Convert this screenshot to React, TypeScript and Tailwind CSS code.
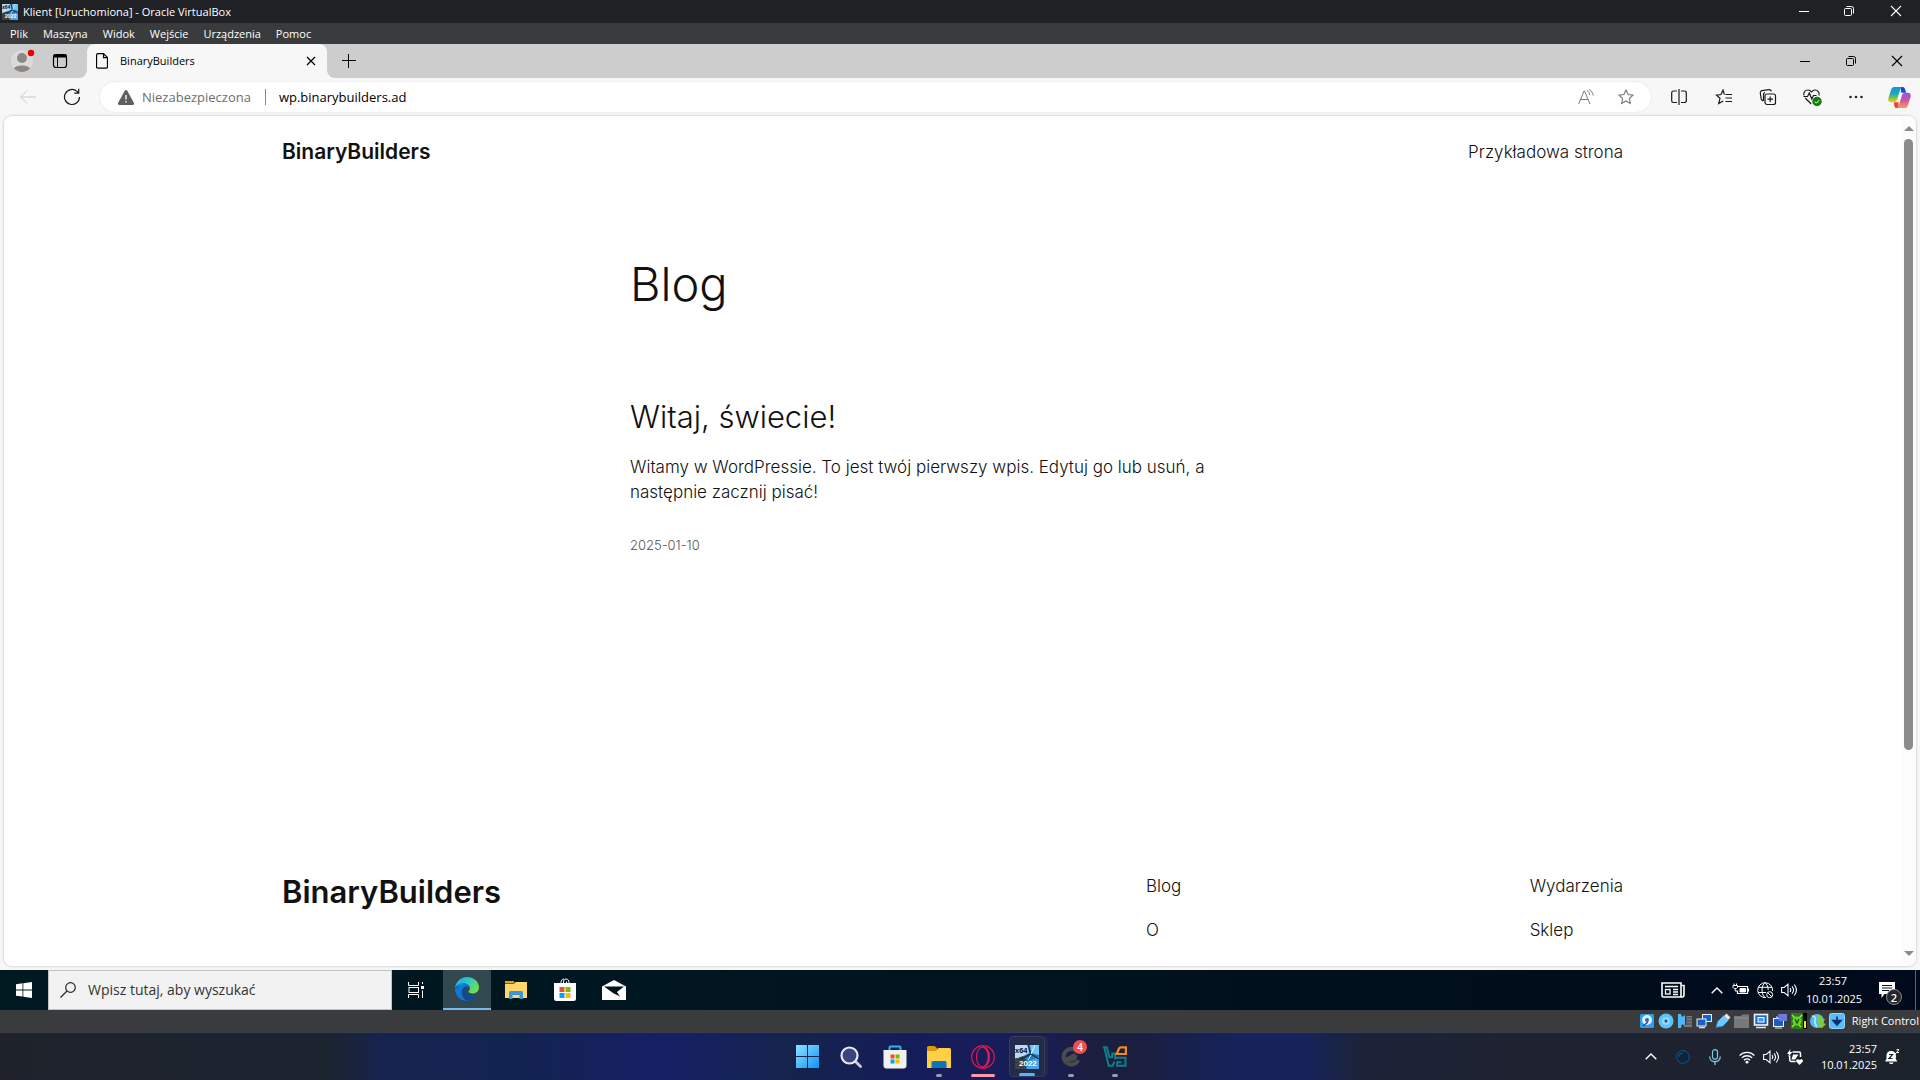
import type { ReactNode } from "react";

type IconProps = { children: ReactNode; className?: string; box?: string };

function Line({ children, className = "size-5", box = "0 0 20 20" }: IconProps) {
  return (
    <svg viewBox={box} className={className} fill="none" stroke="currentColor" aria-hidden="true">
      {children}
    </svg>
  );
}

function IconButton({ label, className = "", children }: { label: string; className?: string; children: ReactNode }) {
  return (
    <button type="button" aria-label={label} className={`flex shrink-0 items-center justify-center ${className}`}>
      {children}
    </button>
  );
}

function VmIcon({ className }: { className: string }) {
  return (
    <svg viewBox="0 0 24 24" className={className} aria-hidden="true">
      <rect width="24" height="24" fill="#2a78b4" />
      <path d="M0 0h13l1 8-9 5H0z" fill="#b9d9ee" />
      <path d="M15 0h9v10l-8-2z" fill="#6fc4f5" />
      <path d="M0 14l8-3 3 4v9H0z" fill="#3b4148" />
      <path d="M24 12v12H12l1-8z" fill="#4aa5ea" />
      <path d="M13 0l3 9 8 5M16 9L4 15" stroke="#123552" strokeWidth="1.4" fill="none" />
      <path d="M16 9l4-9M13 15l3-5" stroke="#e9f6ff" strokeWidth="1" fill="none" />
      <text x="0" y="8" fontSize="7.5" fontWeight="700" fill="#0b0f14" fontFamily="Liberation Sans">x64</text>
      <text x="4" y="21" fontSize="8" fontWeight="700" fill="#fff" fontFamily="Liberation Sans">2022</text>
    </svg>
  );
}

function Minimize() {
  return <Line className="size-3" box="0 0 12 12"><path d="M1 6.5h10" /></Line>;
}
function Restore() {
  return (
    <Line className="size-3" box="0 0 12 12">
      <rect x="1.5" y="3.5" width="7" height="7" rx="1" />
      <path d="M3.5 1.5h5a2 2 0 0 1 2 2v5" />
    </Line>
  );
}
function Close() {
  return <Line className="size-3" box="0 0 12 12"><path d="M1 1l10 10M11 1L1 11" strokeWidth="1.1" /></Line>;
}

function WindowTitle() {
  return (
    <header className="flex h-[23px] shrink-0 items-center bg-[#202125] pl-[2px] text-white">
      <VmIcon className="size-4" />
      <h1 className="ml-[5px] flex-1 text-[11px] leading-4">Klient [Uruchomiona] - Oracle VirtualBox</h1>
      <div className="flex pb-[2px]">
        <IconButton label="Minimalizuj" className="w-[45px]"><Minimize /></IconButton>
        <IconButton label="Przywróć" className="w-[45px]"><Restore /></IconButton>
        <IconButton label="Zamknij" className="w-[49px]"><Close /></IconButton>
      </div>
    </header>
  );
}

const menus = ["Plik", "Maszyna", "Widok", "Wejście", "Urządzenia", "Pomoc"];

function MenuBar() {
  return (
    <nav className="flex h-[21px] shrink-0 items-center gap-[15px] bg-[#3a3b3c] pl-[10px] text-[11px] leading-4 text-white">
      {menus.map((m) => (
        <button key={m} type="button">{m}</button>
      ))}
    </nav>
  );
}

function TabStrip() {
  return (
    <div className="flex h-[34px] shrink-0 bg-[#cdcdcd] text-black">
      <IconButton label="Profil" className="w-11">
        <svg viewBox="0 0 24 24" className="size-6 overflow-visible" aria-hidden="true">
          <circle cx="12" cy="12" r="11" fill="#dcdad8" />
          <circle cx="12" cy="9" r="5" fill="#8c8885" />
          <path d="M4 19.5C5.500 15.500 18.500 15.500 20 19.500C16 24 8 24 4 19.500z" fill="#8c8885" />
          <circle cx="21" cy="4" r="3.200" fill="#e60000" />
        </svg>
      </IconButton>
      <IconButton label="Obszary robocze" className="w-8">
        <Line className="size-4" box="0 0 16 16">
          <rect x="1.500" y="1.500" width="13" height="13" rx="2.500" strokeWidth="1.200" />
          <path d="M1.500 3.500h13M1.500 2.500h13" strokeWidth="2" />
          <path d="M5.500 4v10.500" />
        </Line>
      </IconButton>
      <div className="flex w-[11px] items-end bg-[#f7f7f7]">
        <div className="h-full w-full rounded-br-lg bg-[#cdcdcd]" />
      </div>
      <div className="flex w-[240px] items-center rounded-t-lg bg-[#f7f7f7] pr-[9px] pl-[9px]">
        <Line className="h-4 w-3" box="0 0 12 16">
          <path d="M.6 2.200A1.500 1.500 0 0 1 2 .7h5.500l4 4v9a1.500 1.500 0 0 1-1.500 1.500H2a1.500 1.500 0 0 1-1.500-1.500zM7.500.7v4h4" strokeWidth="1.200" />
        </Line>
        <span className="ml-3 flex-1 text-[11px] leading-4">BinaryBuilders</span>
        <IconButton label="Zamknij kartę" className="size-[14px]">
          <Line className="size-[10px]" box="0 0 10 10"><path d="M1 1l8 8M9 1L1 9" strokeWidth="1.200" /></Line>
        </IconButton>
      </div>
      <div className="w-[8px] bg-[#f7f7f7]">
        <div className="h-full rounded-bl-lg bg-[#cdcdcd]" />
      </div>
      <IconButton label="Nowa karta" className="w-7">
        <Line className="size-[14px]" box="0 0 14 14"><path d="M6.500 0v14M0 6.500h14" /></Line>
      </IconButton>
      <div className="flex-1" />
      <IconButton label="Minimalizuj przeglądarkę" className="w-[46px]"><Minimize /></IconButton>
      <IconButton label="Przywróć przeglądarkę" className="w-[46px]"><Restore /></IconButton>
      <IconButton label="Zamknij przeglądarkę" className="w-[46px]"><Close /></IconButton>
    </div>
  );
}

const STAR = "M8 1l2.100 4.500 4.900.6-3.600 3.400.9 4.900L8 12l-4.300 2.400.9-4.900L1 6.100l4.900-.6z";

function Toolbar() {
  return (
    <div className="flex h-[38px] shrink-0 items-center text-[#1a1a1a]">
      <IconButton label="Wstecz" className="w-14 text-[#c9c9c9]">
        <Line className="size-4" box="0 0 16 16"><path d="M16 8H1M7 1.500L.7 8 7 14.500" /></Line>
      </IconButton>
      <IconButton label="Odśwież" className="mr-[12px] w-8">
        <Line className="size-[18px]" box="0 0 18 18">
          <path d="M16.500 9A7.500 7.500 0 1 1 14 3.400L15.700 5M15.700.8V5.200h-4.400" strokeWidth="1.200" />
        </Line>
      </IconButton>
      <div className="flex h-[30px] flex-1 items-center rounded-full bg-white pr-4 pl-[18px] text-[13px] leading-4 shadow-[0_0_2px_rgba(0,0,0,0.12)]">
        <button type="button" className="flex items-center text-[#6e6e6e]">
          <svg viewBox="0 0 16 15" className="h-[15px] w-4" aria-hidden="true">
            <path d="M8 0c.6 0 1 .3 1.300.8l6.500 11.900c.6 1.100-.1 2.300-1.300 2.300h-13C.3 15-.4 13.800.2 12.700L6.700.8C7 .3 7.400 0 8 0z" fill="#5f5f5f" />
            <path d="M8 5v4.500M8 11v1.600" stroke="#fff" strokeWidth="1.300" />
          </svg>
          <span className="ml-2">Niezabezpieczona</span>
        </button>
        <span className="ml-[14px] h-4 w-px bg-[#8a8a8a]" />
        <input aria-label="Adres" defaultValue="wp.binarybuilders.ad" className="ml-[13px] min-w-0 flex-1 bg-transparent text-black outline-none" />
        <IconButton label="Czytaj na głos" className="w-10 text-[#777]">
          <Line className="size-4" box="0 0 16 16">
            <path d="M.7 15L6 2h.5L12 15M2.600 10.500h7.300M9 1.500c1.500 1 2.400 2.500 2.600 4.500M11 .5c2.200 1.200 3.800 3.200 4.300 6" />
          </Line>
        </IconButton>
        <IconButton label="Dodaj do ulubionych" className="-mr-[11px] w-10 text-[#777]">
          <Line className="size-4 overflow-visible" box="0 0 16 16"><path d={STAR} strokeWidth="1.100" /></Line>
        </IconButton>
      </div>
      <div className="ml-[6px] flex">
        <IconButton label="Podziel ekran" className="w-11">
          <Line className="h-[18px] w-4" box="0 0 16 18">
            <path d="M6 3H2.500A1.800 1.800 0 0 0 .7 4.800v7.900a1.800 1.800 0 0 0 1.800 1.800H6M10 3h3.500a1.800 1.800 0 0 1 1.800 1.800v7.900a1.800 1.800 0 0 1-1.800 1.800H10M8 1v16" strokeWidth="1.200" />
          </Line>
        </IconButton>
        <IconButton label="Ulubione" className="w-[45px]">
          <Line className="size-4 overflow-visible" box="0 0 16 16">
            <path d="M8.500 5.600L7 1.200 5 5.500l-4.500.6L4 9.300l-1.300 5.300L7.200 12M9.500 5.500H16M9.500 9H16M9.500 12.500H16" strokeWidth="1.200" />
          </Line>
        </IconButton>
        <IconButton label="Kolekcje" className="w-11">
          <Line className="size-4 overflow-visible" box="0 0 16 16">
            <rect x="5" y="5" width="10.500" height="10.500" rx="2" strokeWidth="1.200" />
            <path d="M10.200 7.500v5.500M7.500 10.200H13M3 12L1.300 10.500.3 4A2 2 0 0 1 2 1.700L9 .6a2 2 0 0 1 2.300 1.800M3.500 12V5.500A2 2 0 0 1 5 3.600" strokeWidth="1.200" />
          </Line>
        </IconButton>
        <IconButton label="Podstawowe funkcje przeglądarki" className="w-11">
          <svg viewBox="0 0 18 17" className="h-[17px] w-[18px] overflow-visible" fill="none" stroke="currentColor" aria-hidden="true">
            <path d="M1 6.500C0 3 2.500 1 5 1c1.500 0 2.700.8 3.500 2C9.300 1.800 10.500 1 12 1c2.500 0 5 2.500 4 5.500M2.200 9l6 6M.5 7.500h4L6.300 4l2.500 6 1.700-3.500h3" strokeWidth="1.200" />
            <circle cx="14" cy="12.500" r="4.700" fill="#0f7b10" stroke="none" />
            <path d="M11.800 12.600l1.600 1.600 2.800-3" stroke="#fff" />
          </svg>
        </IconButton>
        <IconButton label="Ustawienia i inne" className="w-11">
          <svg viewBox="0 0 14 4" className="h-1 w-[14px]" fill="#222" aria-hidden="true">
            <circle cx="1.500" cy="2" r="1.300" /><circle cx="7" cy="2" r="1.300" /><circle cx="12.500" cy="2" r="1.300" />
          </svg>
        </IconButton>
        <IconButton label="Copilot" className="w-[42px]">
          <svg viewBox="0 0 24 22" className="h-[21px] w-[23px]" aria-hidden="true">
            <defs>
              <linearGradient id="cpA" x1="0" y1="0" x2="0" y2="1">
                <stop offset="0" stopColor="#1592e6" /><stop offset=".45" stopColor="#20a9b8" /><stop offset=".7" stopColor="#7cc04b" /><stop offset="1" stopColor="#f5cf1a" />
              </linearGradient>
              <linearGradient id="cpB" x1="0" y1="0" x2="0" y2="1">
                <stop offset="0" stopColor="#8f55f0" /><stop offset=".5" stopColor="#d2529f" /><stop offset="1" stopColor="#ff9a52" />
              </linearGradient>
            </defs>
            <path d="M13 0h2.500c1.300 0 2 1 2.400 2.500L19 6h-5z" fill="#1b48c8" />
            <path d="M6 16l5 0 0 6H9c-1.500 0-2-1-2.400-2.200z" fill="#e8482f" />
            <path d="M6.500 0H15c-1.200.3-1.700 1.200-2.200 2.700L9.500 13c-.7 2.200-1.600 3-3.500 3H3.200C.6 16-.3 14 .4 11.500L3.200 3C3.900 1 4.800 0 6.500 0z" fill="url(#cpA)" />
            <path d="M17.500 22H9c1.200-.3 1.700-1.200 2.200-2.700L14.500 9c.7-2.200 1.600-3 3.500-3h2.800c2.600 0 3.500 2 2.800 4.500L20.800 19c-.7 2-1.600 3-3.300 3z" fill="url(#cpB)" />
          </svg>
        </IconButton>
      </div>
    </div>
  );
}

const footerLinks = [["Blog", "O"], ["Wydarzenia", "Sklep"]];

function Site() {
  return (
    <div className="flex-1 overflow-hidden font-['Inter',sans-serif] text-[#111]">
      <div className="mx-auto max-w-[1341px]">
        <header className="flex h-[71px] items-center justify-between">
          <a href="#home" className="text-[21px] leading-7 font-semibold">BinaryBuilders</a>
          <a href="#sample" className="text-[17px] leading-6 font-light">Przykładowa strona</a>
        </header>
        <main className="mx-auto max-w-[645px] pt-[68px]">
          <h2 className="text-[47px] leading-[58px] font-light">Blog</h2>
          <article className="pt-[86px]">
            <h3 className="text-[31px] leading-9 font-light"><a href="#post">Witaj, świecie!</a></h3>
            <p className="mt-5 max-w-[600px] text-[17px] leading-[25px] font-light">
              Witamy w WordPressie. To jest twój pierwszy wpis. Edytuj go lub usuń, a następnie zacznij pisać!
            </p>
            <time dateTime="2025-01-10" className="mt-[30px] block text-[13px] leading-5 font-light text-[#555]">2025-01-10</time>
          </article>
        </main>
        <footer className="flex justify-between pt-[319px]">
          <a href="#home" className="text-[31px] leading-9 font-semibold">BinaryBuilders</a>
          <div className="flex w-[477px] justify-between">
            {footerLinks.map((col) => (
              <ul key={col[0]} className="flex flex-col gap-5 text-[17px] leading-6 font-light">
                {col.map((t) => <li key={t}><a href={`#${t}`}>{t}</a></li>)}
              </ul>
            ))}
          </div>
        </footer>
      </div>
    </div>
  );
}

function Scrollbar() {
  return (
    <div className="flex w-[15px] shrink-0 flex-col items-center bg-[#fcfcfc] py-[10px]" aria-hidden="true">
      <svg viewBox="0 0 10 5" className="h-[5px] w-[10px]"><path d="M0 5l5-5 5 5z" fill="#8b8b8b" /></svg>
      <div className="my-2 w-[9px] flex-1">
        <div className="h-[76%] w-full rounded-full bg-[#8b8b8b]" />
      </div>
      <svg viewBox="0 0 10 5" className="h-[5px] w-[10px]"><path d="M0 0l5 5 5-5z" fill="#8b8b8b" /></svg>
    </div>
  );
}

function Browser() {
  return (
    <section className="flex min-h-0 flex-1 flex-col bg-[#f7f7f7]">
      <TabStrip />
      <Toolbar />
      <div className="mx-1 mb-1 flex min-h-0 flex-1 overflow-hidden rounded-lg bg-white shadow-[0_0_2px_1px_rgba(0,0,0,0.12)]">
        <Site />
        <Scrollbar />
      </div>
    </section>
  );
}

function Chevron({ className }: { className: string }) {
  return <Line className={className} box="0 0 12 7"><path d="M.7 6.300L6 1l5.300 5.300" strokeWidth="1.400" /></Line>;
}

function Speaker() {
  return (
    <Line className="size-4" box="0 0 16 16">
      <path d="M.6 5.500h2.600L7 2.200v11.600L3.200 10.500H.6zM9 6c.9 1.200.9 2.800 0 4M11 4.300c1.900 2.200 1.900 5.200 0 7.400M13.200 2.500c2.700 3.300 2.700 7.700 0 11" strokeWidth="1.100" />
    </Line>
  );
}

function Squares({ x, y, s, gap }: { x: number; y: number; s: number; gap: number }) {
  const d = s + gap;
  return (
    <>
      <rect x={x} y={y} width={s} height={s} fill="#f25022" />
      <rect x={x + d} y={y} width={s} height={s} fill="#7fba00" />
      <rect x={x} y={y + d} width={s} height={s} fill="#00a4ef" />
      <rect x={x + d} y={y + d} width={s} height={s} fill="#ffb900" />
    </>
  );
}

function GuestTaskbar() {
  return (
    <div className="flex h-10 shrink-0 items-stretch bg-linear-to-r from-[#001a22] via-[#00141f] via-50% to-[#000a1a] text-white">
      <IconButton label="Start" className="w-12">
        <svg viewBox="0 0 16 16" className="size-4" fill="#fff" aria-hidden="true">
          <path d="M0 2.200L6.500 1.300v6.200H0zM7.300 1.200L16 0v7.500H7.300zM0 8.400h6.500v6.200L0 13.800zM7.300 8.400H16V16l-8.700-1.200z" />
        </svg>
      </IconButton>
      <label className="flex w-[344px] items-center border border-[#c2c2c2] bg-[#f2f2f2] pl-[11px] text-[#2b2b2b]">
        <Line className="size-4" box="0 0 16 16"><circle cx="10.500" cy="5.500" r="4.800" strokeWidth="1.200" /><path d="M7 9L.5 15.500" strokeWidth="1.300" /></Line>
        <input placeholder="Wpisz tutaj, aby wyszukać" aria-label="Wpisz tutaj, aby wyszukać" className="ml-3 min-w-0 flex-1 bg-transparent text-[14px] leading-5 outline-none placeholder:text-[#333]" />
      </label>
      <IconButton label="Widok zadań" className="mr-[3px] w-12">
        <Line className="size-4" box="0 0 16 16">
          <path d="M.5 0v3.500h10V0M.5 16v-3.500h10V16M14.500 0v2M14.500 8.500V16" />
          <rect x="1" y="5.500" width="9.500" height="5" />
          <path d="M13 5.500h3" strokeWidth="3" />
        </Line>
      </IconButton>
      <div className="flex gap-[1px]">
        <IconButton label="Microsoft Edge" className="w-12 border-b-2 border-[#76b9ed] bg-[#33474f]">
          <svg viewBox="0 0 24 24" className="size-6" aria-hidden="true">
            <defs>
              <linearGradient id="edA" x1="0" y1="0" x2="1" y2=".5"><stop offset="0" stopColor="#1fa5e0" /><stop offset=".5" stopColor="#2cc3d2" /><stop offset="1" stopColor="#6de04f" /></linearGradient>
              <linearGradient id="edB" x1="0" y1="0" x2="0" y2="1"><stop offset="0" stopColor="#1b9de2" /><stop offset="1" stopColor="#0c59a4" /></linearGradient>
            </defs>
            <path d="M0 12C0 5 5.500 0 12 0s12 4.800 12 10.200c0 4-3 6.300-6.300 6.300-3 0-4.200-1-4.200-1.900 0-.8 1.400-1.300 1.400-3.400C14.900 8.500 12 6.500 8.500 6.500 4 6.500.7 9 0 12z" fill="url(#edA)" />
            <path d="M0 12c.5-3.500 4-5.800 8-5.800 3.500 0 6.500 2 6.800 4.600-.6-1-1.500-1.400-2.800-1.400-3 0-5 3-5 6.300 0 3.800 2.800 7.300 6.500 8.200C6 24.500 0 19 0 12z" fill="#0f78d0" />
            <path d="M12 9.300c-4 .5-5.500 4-5.300 6.700.3 4.500 3.800 8 8 7.800 3.300-.3 6.300-2.500 8-5.500.2-.5-.2-.8-.6-.6-1.400.8-3 1.200-4.700 1.100-4.400-.2-6.900-2.300-7.100-5.300-.1-1.800.8-3.300 1.700-4.200z" fill="#104a94" />
            <path d="M0 12c.5-3.500 4-5.800 8-5.800L6.500 9.500z" fill="url(#edB)" />
          </svg>
        </IconButton>
        <IconButton label="Eksplorator plików" className="w-12">
          <svg viewBox="0 0 22 18" className="h-[18px] w-[22px]" aria-hidden="true">
            <path d="M0 0h8.500l1.500 2.500H0z" fill="#e8a21a" />
            <path d="M0 3h9l1.500-2H22v16H0z" fill="#ffd667" />
            <path d="M4 18v-6.500A1.500 1.500 0 0 1 5.500 10h11a1.500 1.500 0 0 1 1.500 1.500V18h-3.500v-4h-7v4z" fill="#3a94d9" />
          </svg>
        </IconButton>
        <IconButton label="Microsoft Store" className="w-12">
          <svg viewBox="0 0 24 24" className="size-6" aria-hidden="true">
            <path d="M8 6V4.500C8 2.500 9.300 1 11 1M16 6V4.500C16 2.500 15 1 13 1M10.500 6V4c0-1.500 1-3 2.500-3M13.500 6V3.500" stroke="#fff" fill="none" />
            <path d="M1 5h22v15.500a2.500 2.500 0 0 1-2.500 2.500h-17A2.500 2.500 0 0 1 1 20.500z" fill="#fff" />
            <Squares x={6.5} y={9} s={5} gap={1} />
          </svg>
        </IconButton>
        <IconButton label="Poczta" className="w-12">
          <svg viewBox="0 0 24 20" className="h-5 w-6" aria-hidden="true">
            <path d="M0 6.500L12 0l12 6.500V20H0z" fill="#fff" />
            <path d="M2 6.500h20L15 12l3 4.500L11 13z" fill="#00161f" />
          </svg>
        </IconButton>
      </div>
      <div className="flex-1" />
      <IconButton label="Wiadomości" className="mr-[13px] w-[38px]">
        <Line className="h-4 w-6" box="0 0 24 16">
          <path d="M1 1h19v14H2.500A1.500 1.500 0 0 1 1 13.500zM20 3.500h3V13a2 2 0 0 1-2 2h-2" strokeWidth="1.600" />
          <path d="M4 4.500h13M12 7.500h5M12 10h5M12 12.500h5" strokeWidth="1.300" />
          <rect x="4.500" y="7.500" width="4.500" height="4.500" strokeWidth="1.300" />
        </Line>
      </IconButton>
      <div className="flex">
        <IconButton label="Pokaż ukryte ikony" className="w-6"><Chevron className="h-[7px] w-3" /></IconButton>
        <IconButton label="Bateria" className="w-6">
          <Line className="size-4 overflow-visible" box="0 0 16 16">
            <path d="M5 4.500h9.500v7H4.500V9M15.500 6.500v3" strokeWidth="1.200" />
            <path d="M7 6.500h5.500v3.500H7z" fill="currentColor" />
            <path d="M1 1.500v2M3.500 1.500v2M0 3.500h4.500v2l-1 1H1l-1-1zM2.200 6.500V9H5" />
          </Line>
        </IconButton>
        <IconButton label="Sieć" className="w-6">
          <Line className="size-4 overflow-visible" box="0 0 16 16">
            <path d="M9 15.500A7.400 7.400 0 1 1 15.500 9M1 5.300h14M1 10.500h8M8 .5C4 4 4 12 8 15.500M8 .5c2.200 2.200 3.200 4.700 3.200 7.500" />
            <circle cx="12.700" cy="12.700" r="3" /><path d="M10.700 10.700l4 4" />
          </Line>
        </IconButton>
        <IconButton label="Głośność" className="w-6"><Speaker /></IconButton>
      </div>
      <button type="button" className="ml-[5px] w-[54px] text-center text-[11px] leading-[18px]">
        23:57<br />10.01.2025
      </button>
      <button type="button" aria-label="Powiadomienia" className="mr-[10px] ml-[19px] flex w-[26px] items-center">
        <span className="relative">
          <svg viewBox="0 0 16 16" className="size-4" aria-hidden="true">
            <path d="M0 0h16v12H5.500L2.500 16v-4H0z" fill="#fff" />
            <path d="M3 3.500h10M3 6h10M3 8.500h7" stroke="#00101c" />
          </svg>
          <span className="absolute top-[7px] left-[7px] flex size-4 items-center justify-center rounded-full border border-[#8a8a8a] bg-[#23272b] text-[11px] leading-none font-semibold">2</span>
        </span>
      </button>
      <div className="mr-1 w-px bg-[#5b636b]" />
    </div>
  );
}

function StatusBar() {
  const cls = "size-4";
  return (
    <div className="flex h-[22px] shrink-0 items-center justify-end gap-[3px] bg-[#3a3b3c] pr-px text-[11px] leading-4 text-white">
      <svg viewBox="0 0 16 16" className={cls}><rect x="1" y="1" width="14" height="14" rx="1.500" fill="#2f9df0" /><circle cx="8" cy="7" r="5" fill="#e4f2fb" /><circle cx="8" cy="7" r="2" fill="#2468b0" /><path d="M4 13l5-4" stroke="#1a4c88" strokeWidth="1.500" /></svg>
      <svg viewBox="0 0 16 16" className={cls}><circle cx="8" cy="8" r="7.500" fill="#5cc3ff" /><circle cx="8" cy="8" r="4" fill="#8fd9ff" /><circle cx="8" cy="8" r="1.500" fill="#174f93" /></svg>
      <svg viewBox="0 0 16 16" className={cls}><path d="M1 1h3l1 3 3-2v11l-3-2-1 4H1z" fill="#4fb6f7" /><path d="M9.500 3H15v11H7v-2h2.500z" fill="#77797b" /><path d="M10 5h5M10 8h5M10 11h5" stroke="#45484a" /></svg>
      <svg viewBox="0 0 16 16" className={cls}><rect x="6.500" y="1.500" width="9" height="7" fill="#1660c8" stroke="#e8f2fa" /><rect x="1" y="6" width="9" height="7" fill="#1660c8" stroke="#e8f2fa" /><path d="M3 14.500h6" stroke="#dce6ee" strokeWidth="1.500" /></svg>
      <svg viewBox="0 0 16 16" className={cls}><path d="M1 15L2.500 8.500l6-6 5 5-6 6L3 14z" fill="#6cc8ff" stroke="#2475bd" strokeWidth=".7" /><path d="M9 3L11.500.5l4 4L13 7z" fill="#e6eaee" /></svg>
      <svg viewBox="0 0 16 16" className={cls}><path d="M0 3h7l1-1.500h7V15H0z" fill="#777879" /><path d="M0 5h15" stroke="#8d8e8f" /></svg>
      <svg viewBox="0 0 16 16" className={cls}><rect x="1.500" y="1.500" width="13" height="10.500" fill="#1c66c9" stroke="#eef5fb" strokeWidth="1.600" /><rect x="5" y="4.500" width="6" height="4.500" fill="#3f97ef" stroke="#fff" /><path d="M3 14.500h10" stroke="#e4e8ec" strokeWidth="1.500" /></svg>
      <svg viewBox="0 0 16 16" className={cls}><rect x="1.500" y="5.500" width="10" height="8" fill="#1660c8" stroke="#e8f2fa" /><path d="M6 1h9v7H7z" fill="#6d78e0" /><path d="M4 3l3 1.500L4 6z" fill="#a9b3ff" /><path d="M3 15h7" stroke="#dce6ee" /></svg>
      <svg viewBox="0 0 16 16" className={cls}><rect width="12" height="16" fill="#2f7a18" /><path d="M1 2l3 3M11 2L8 5M1 14l3-3M10 14l-2-2" stroke="#8ff04c" strokeWidth="1.500" /><circle cx="6" cy="8" r="4.500" fill="#6cd32c" /><path d="M4 6l2 4 2-4" stroke="#174d08" fill="none" strokeWidth="1.300" /><rect x="12" width="4" height="16" fill="#000" /><rect x="13" y="8" width="2" height="7" fill="#ffe600" /></svg>
      <svg viewBox="0 0 16 16" className={cls}><circle cx="7" cy="8" r="7" fill="#56b9f5" /><path d="M2 3c3 0 4 2 3 5s2 3 1 6" stroke="#c5ebff" fill="none" strokeWidth="1.500" /><path d="M7 3h5v3h3l-2 4 3 1-4 4-5-1 3-3-3-3z" fill="#7ccf3a" /></svg>
      <svg viewBox="0 0 16 16" className={cls}><rect x=".5" y=".5" width="15" height="15" rx="2" fill="#58bdf9" stroke="#8fd6ff" /><path d="M8 3.500v5M4 7.500h8L8 12z" stroke="#0d2f6b" strokeWidth="1.600" fill="#0d2f6b" /></svg>
      <span className="ml-1">Right Control</span>
    </div>
  );
}

function HostTaskbar() {
  return (
    <div className="grid h-12 shrink-0 grid-cols-[1fr_auto_1fr] items-stretch border-t border-[#3a3f50] bg-[linear-gradient(90deg,#1f222b_0%,#1c2430_17%,#16234f_20%,#13234f_27%,#161f66_34%,#14225a_38%,#14244c_41%,#151d58_47%,#181d58_54%,#1b1e3c_57%,#1a1f42_60%,#15235a_64%,#16235a_68%,#1c2338_71%,#1f2230_80%,#1c222c_100%)] text-white">
      <div />
      <div className="flex pl-[2px]">
        <IconButton label="Start systemu" className="w-11">
          <svg viewBox="0 0 23 23" className="size-[23px]" aria-hidden="true">
            <defs><linearGradient id="wn" x1="0" y1="0" x2="1" y2="1"><stop offset="0" stopColor="#8fe0ff" /><stop offset="1" stopColor="#0f95f5" /></linearGradient></defs>
            <path d="M0 0h11v11H0zM12 0h11v11H12zM0 12h11v11H0zM12 12h11v11H12z" fill="url(#wn)" />
          </svg>
        </IconButton>
        <IconButton label="Wyszukaj" className="w-11">
          <svg viewBox="0 0 22 22" className="size-[22px]" fill="none" aria-hidden="true">
            <path d="M15.500 15.500l5 5" stroke="#c9cbd6" strokeWidth="2.800" strokeLinecap="round" />
            <circle cx="9.500" cy="9.500" r="8" fill="#3b4380" stroke="#e8e8ee" strokeWidth="2.200" />
          </svg>
        </IconButton>
        <IconButton label="Sklep" className="w-11">
          <svg viewBox="0 0 24 24" className="size-6" aria-hidden="true">
            <path d="M6.500 6V2.500A1 1 0 0 1 7.500 1.500h9a1 1 0 0 1 1 1V6" stroke="#2bb3f3" strokeWidth="2" fill="none" />
            <path d="M.5 5h23v15.500a3 3 0 0 1-3 3h-17a3 3 0 0 1-3-3z" fill="#f1f1f1" />
            <Squares x={7.5} y={9.5} s={4} gap={1} />
          </svg>
        </IconButton>
        <RunningApp label="Pliki" dot="w-[6px] bg-[#9a9cb0]">
          <svg viewBox="0 0 24 22" className="h-[22px] w-6" aria-hidden="true">
            <path d="M0 1.500A1.500 1.500 0 0 1 1.500 0h6L10.500 2.500V6H0z" fill="#dd9a0b" />
            <path d="M0 5h9l2.500-3h11A1.500 1.500 0 0 1 24 3.500V22H0z" fill="#ffcf45" />
            <path d="M4.500 22v-5.500A1.500 1.500 0 0 1 6 15h12a1.500 1.500 0 0 1 1.500 1.500V22z" fill="#1272bd" />
          </svg>
        </RunningApp>
        <RunningApp label="Opera GX" dot="w-6 bg-[#ff9aa8]">
          <svg viewBox="0 0 24 24" className="size-6" fill="none" stroke="#e0184f" strokeWidth="1.200" aria-hidden="true">
            <circle cx="12" cy="12" r="11.300" /><ellipse cx="12" cy="12" rx="6.500" ry="10.200" />
            <path d="M13 2.500c5.500 3.500 5.500 15.500 0 19M11.500 2c9 1 9 19 0 20" />
          </svg>
        </RunningApp>
        <RunningApp label="VirtualBox" dot="w-4 bg-[#4cb8f5]" active>
          <VmIcon className="size-6" />
        </RunningApp>
        <RunningApp label="Ethernet" dot="w-[6px] bg-[#9a9cb0]" badge="4">
          <svg viewBox="0 0 22 22" className="size-5" fill="none" stroke="#4a4b4e" strokeWidth="4.500" aria-hidden="true">
            <path d="M19 14.500A8.500 8.500 0 1 1 18.500 6M5.500 14L16 8.500M7 14c4 0 9-1 9-5" />
          </svg>
        </RunningApp>
        <RunningApp label="VirtualBox Manager" dot="w-[6px] bg-[#9a9cb0]">
          <svg viewBox="0 0 24 22" className="h-[22px] w-6" fill="none" aria-hidden="true">
            <path d="M0 1.300h3.800l2.700 10h2.700V7.500h3V13M1.500 2l4.200 17.800h4l1.800-4.300M12.500 13.500v-1.700h10v8h-8.300v-3.500h4.300" stroke="#0f7f8c" strokeWidth="2" />
            <path d="M13.700 8l2.200-5.200a2.200 2.200 0 0 1 2-1.400h5V8z" stroke="#f08c1a" strokeWidth="2.200" />
          </svg>
        </RunningApp>
      </div>
      <div className="flex items-center justify-end">
        <IconButton label="Ukryte ikony" className="w-8"><Chevron className="h-[7px] w-3" /></IconButton>
        <IconButton label="Cortana" className="w-8 text-[#0b5a9c]">
          <Line className="size-[14px]" box="0 0 14 14"><circle cx="7" cy="7" r="6.300" fill="#0e2238" /><path d="M3 7a4 4 0 0 1 4-4" /></Line>
        </IconButton>
        <IconButton label="Mikrofon" className="w-8 text-[#7cc8e0]">
          <Line className="size-4" box="0 0 16 16"><rect x="5.500" y=".7" width="5" height="9.500" rx="2.500" strokeWidth="1.200" /><path d="M2.700 7.500c0 7 10.600 7 10.600 0M8 13v3" strokeWidth="1.300" /></Line>
        </IconButton>
        <button type="button" aria-label="Szybkie ustawienia" className="ml-1 flex gap-2 px-1">
          <Line className="size-4" box="0 0 16 16">
            <path d="M.6 6.500c4-4.300 10.800-4.300 14.800 0M2.800 8.900c2.900-2.900 7.500-2.900 10.400 0M5 11.200c1.700-1.700 4.300-1.700 6 0" strokeWidth="1.300" />
            <circle cx="8" cy="13.200" r="1.400" fill="currentColor" stroke="none" />
          </Line>
          <Speaker />
          <Line className="size-4" box="0 0 16 16">
            <path d="M5.500 3h6.500A1.500 1.500 0 0 1 13.500 4.500V8M2.700 6.500v4.500A1.500 1.500 0 0 0 4.200 12.500H8.500" strokeWidth="1.500" />
            <path d="M3.500 0L0 5h2L1 8l4.500-5H3z" fill="currentColor" stroke="none" />
            <path d="M6 5.500h5.500L8 10.500H4.500z" fill="currentColor" stroke="none" />
            <path d="M12.500 16L9.300 12.700c-1-1.500 1-3.700 3.200-1.700 2.200-2 4.200.2 3.200 1.700z" fill="currentColor" stroke="none" />
          </Line>
        </button>
        <button type="button" className="ml-[6px] w-[64px] text-right text-[11px] leading-4">
          23:57<br />10.01.2025
        </button>
        <IconButton label="Centrum powiadomień" className="mr-[20px] ml-[7px] w-4">
          <svg viewBox="0 0 16 16" className="size-4" aria-hidden="true">
            <path d="M1 12.500L2.500 10V6a4.700 4.700 0 0 1 9.300 0v4l1.500 2.500zM5 13.500h4.500c-.5 2-4 2-4.500 0z" fill="#fff" />
            <path d="M5 5.500h3.500L5 9.500h3.500" stroke="#1c222c" fill="none" strokeWidth="1.200" />
            <path d="M9.500 4.500h2.500L9.500 7.500h2.500M12.500.7H15L12.500 3.500H15" stroke="#fff" fill="none" />
          </svg>
        </IconButton>
      </div>
    </div>
  );
}

function RunningApp({ label, dot, badge, active, children }: { label: string; dot: string; badge?: string; active?: boolean; children: ReactNode }) {
  return (
    <button
      type="button"
      aria-label={label}
      className={`relative my-[3px] flex items-center justify-center ${active ? "mx-1 w-9 rounded border border-[#353b58] bg-[#242a4a] shadow-[3px_0_0_#232848]" : "w-11"}`}
    >
      {children}
      <span className={`absolute bottom-0 h-[3px] rounded-full ${dot}`} />
      {badge && (
        <span className="absolute top-[4px] right-[6px] flex size-[14px] items-center justify-center rounded-full bg-[#f04f52] text-[10px] leading-none font-semibold">{badge}</span>
      )}
    </button>
  );
}

export default function App() {
  return (
    <div className="flex h-screen flex-col overflow-hidden font-['Open_Sans',sans-serif]">
      <WindowTitle />
      <MenuBar />
      <Browser />
      <GuestTaskbar />
      <StatusBar />
      <HostTaskbar />
    </div>
  );
}
